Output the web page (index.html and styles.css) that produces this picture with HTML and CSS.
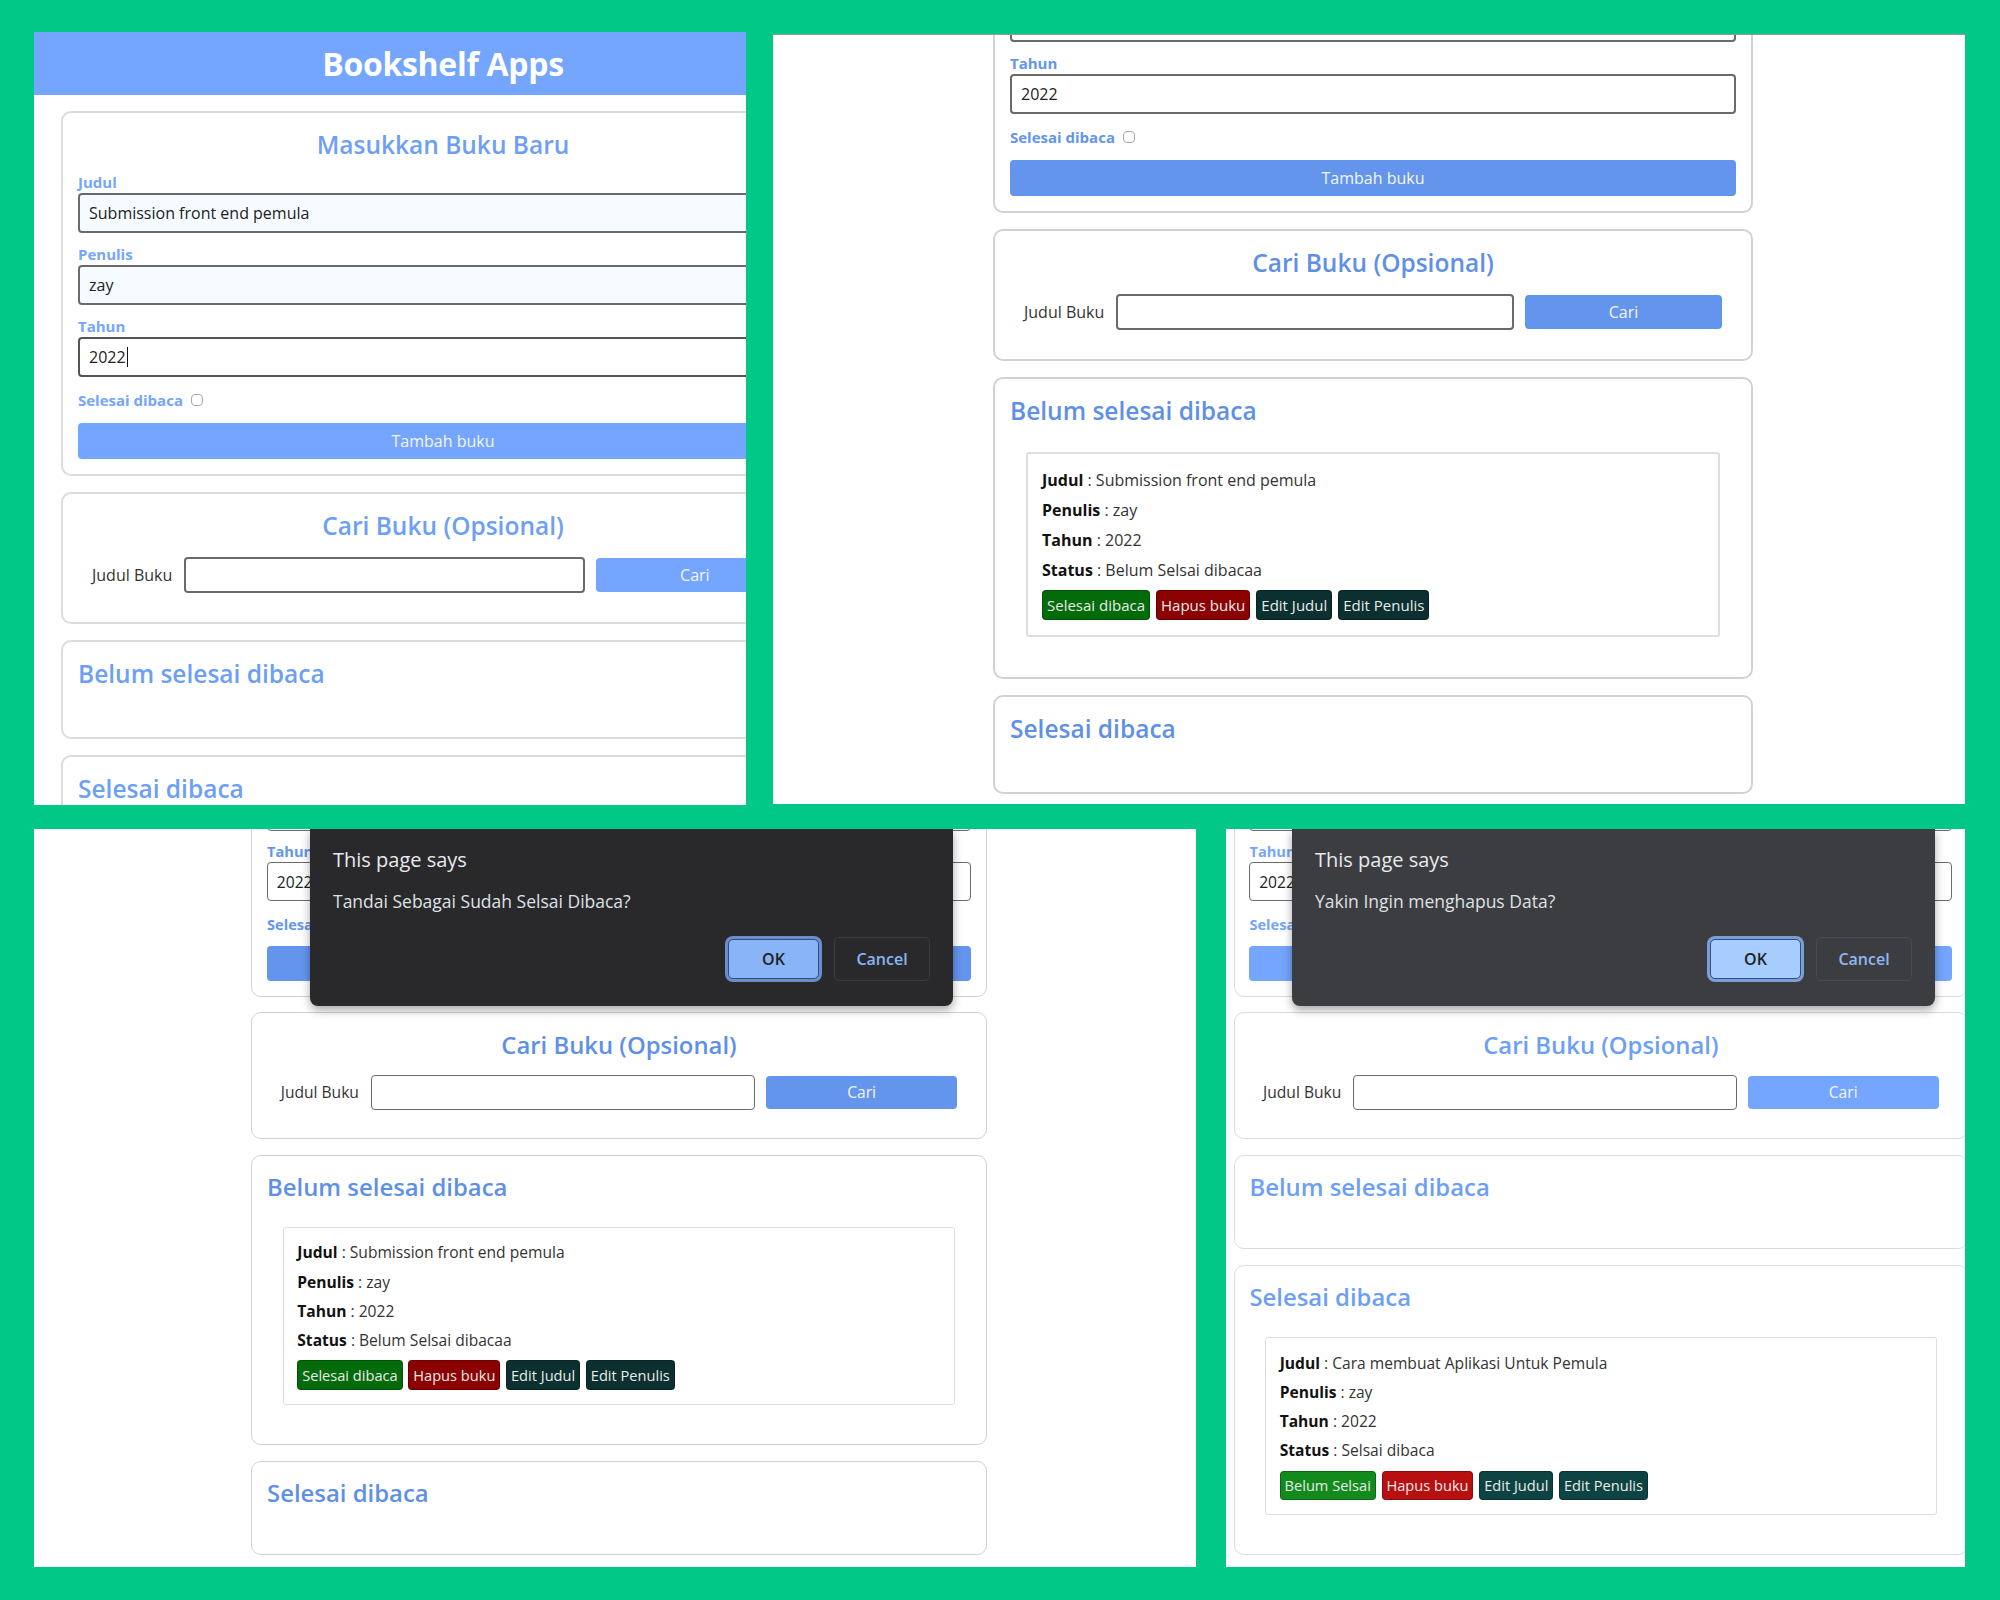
FILE: index.html
```html
<!DOCTYPE html>
<html lang="id">
<head>
<meta charset="utf-8">
<title>Bookshelf Apps</title>
<link rel="stylesheet" href="styles.css">
</head>
<body>
<div class="sheet">
  <div class="row row-top">
    <!-- Panel 1 -->
    <div class="panel panel-1">
      <div class="page p1">
        <header class="app-head"><h1>Bookshelf Apps</h1></header>
        <main class="cards">
          <section class="card form-card">
            <h2>Masukkan Buku Baru</h2>
            <div class="field"><label>Judul</label><div class="input tinted">Submission front end pemula</div></div>
            <div class="field"><label>Penulis</label><div class="input tinted">zay</div></div>
            <div class="field"><label>Tahun</label><div class="input focus">2022<span class="caret"></span></div></div>
            <div class="check-row"><span>Selesai dibaca</span><span class="box"></span></div>
            <button class="primary wide">Tambah buku</button>
          </section>
          <section class="card search-card">
            <h2>Cari Buku (Opsional)</h2>
            <div class="search-row"><label>Judul Buku</label><div class="input"></div><button class="primary">Cari</button></div>
          </section>
          <section class="card shelf"><h2 class="left">Belum selesai dibaca</h2><div class="list"></div></section>
          <section class="card shelf"><h2 class="left">Selesai dibaca</h2><div class="list"></div></section>
        </main>
      </div>
    </div>

    <!-- Panel 2 -->
    <div class="panel panel-2">
      <div class="page p2">
        <header class="app-head"><h1>Bookshelf Apps</h1></header>
        <main class="cards">
          <section class="card form-card">
            <h2>Masukkan Buku Baru</h2>
            <div class="field"><label>Judul</label><div class="input">Submission front end pemula</div></div>
            <div class="field"><label>Penulis</label><div class="input">zay</div></div>
            <div class="field"><label>Tahun</label><div class="input">2022</div></div>
            <div class="check-row"><span>Selesai dibaca</span><span class="box"></span></div>
            <button class="primary wide">Tambah buku</button>
          </section>
          <section class="card search-card">
            <h2>Cari Buku (Opsional)</h2>
            <div class="search-row"><label>Judul Buku</label><div class="input"></div><button class="primary">Cari</button></div>
          </section>
          <section class="card shelf">
            <h2 class="left">Belum selesai dibaca</h2>
            <div class="list">
              <article class="book">
                <p><b>Judul</b> : Submission front end pemula</p>
                <p><b>Penulis</b> : zay</p>
                <p><b>Tahun</b> : 2022</p>
                <p><b>Status</b> : Belum Selsai dibacaa</p>
                <div class="actions"><button class="act green">Selesai dibaca</button><button class="act red">Hapus buku</button><button class="act dark">Edit Judul</button><button class="act dark">Edit Penulis</button></div>
              </article>
            </div>
          </section>
          <section class="card shelf"><h2 class="left">Selesai dibaca</h2><div class="list"></div></section>
        </main>
      </div>
    </div>
  </div>

  <div class="row row-bottom">
    <!-- Panel 3 -->
    <div class="panel panel-3">
      <div class="page p3">
        <header class="app-head"><h1>Bookshelf Apps</h1></header>
        <main class="cards">
          <section class="card form-card">
            <h2>Masukkan Buku Baru</h2>
            <div class="field"><label>Judul</label><div class="input">Submission front end pemula</div></div>
            <div class="field"><label>Penulis</label><div class="input">zay</div></div>
            <div class="field"><label>Tahun</label><div class="input">2022</div></div>
            <div class="check-row"><span>Selesai dibaca</span><span class="box"></span></div>
            <button class="primary wide">Tambah buku</button>
          </section>
          <section class="card search-card">
            <h2>Cari Buku (Opsional)</h2>
            <div class="search-row"><label>Judul Buku</label><div class="input"></div><button class="primary">Cari</button></div>
          </section>
          <section class="card shelf">
            <h2 class="left">Belum selesai dibaca</h2>
            <div class="list">
              <article class="book">
                <p><b>Judul</b> : Submission front end pemula</p>
                <p><b>Penulis</b> : zay</p>
                <p><b>Tahun</b> : 2022</p>
                <p><b>Status</b> : Belum Selsai dibacaa</p>
                <div class="actions"><button class="act green">Selesai dibaca</button><button class="act red">Hapus buku</button><button class="act dark">Edit Judul</button><button class="act dark">Edit Penulis</button></div>
              </article>
            </div>
          </section>
          <section class="card shelf"><h2 class="left">Selesai dibaca</h2><div class="list"></div></section>
        </main>
      </div>
      <div class="dialog d3">
        <div class="d-title">This page says</div>
        <div class="d-msg">Tandai Sebagai Sudah Selsai Dibaca?</div>
        <div class="d-actions"><button class="d-ok">OK</button><button class="d-cancel">Cancel</button></div>
      </div>
    </div>

    <!-- Panel 4 -->
    <div class="panel panel-4">
      <div class="page p4">
        <header class="app-head"><h1>Bookshelf Apps</h1></header>
        <main class="cards">
          <section class="card form-card">
            <h2>Masukkan Buku Baru</h2>
            <div class="field"><label>Judul</label><div class="input">Cara membuat Aplikasi Untuk Pemula</div></div>
            <div class="field"><label>Penulis</label><div class="input">zay</div></div>
            <div class="field"><label>Tahun</label><div class="input">2022</div></div>
            <div class="check-row"><span>Selesai dibaca</span><span class="box"></span></div>
            <button class="primary wide">Tambah buku</button>
          </section>
          <section class="card search-card">
            <h2>Cari Buku (Opsional)</h2>
            <div class="search-row"><label>Judul Buku</label><div class="input"></div><button class="primary">Cari</button></div>
          </section>
          <section class="card shelf"><h2 class="left">Belum selesai dibaca</h2><div class="list"></div></section>
          <section class="card shelf">
            <h2 class="left">Selesai dibaca</h2>
            <div class="list">
              <article class="book">
                <p><b>Judul</b> : Cara membuat Aplikasi Untuk Pemula</p>
                <p><b>Penulis</b> : zay</p>
                <p><b>Tahun</b> : 2022</p>
                <p><b>Status</b> : Selsai dibaca</p>
                <div class="actions"><button class="act green">Belum Selsai</button><button class="act red">Hapus buku</button><button class="act dark">Edit Judul</button><button class="act dark">Edit Penulis</button></div>
              </article>
            </div>
          </section>
        </main>
      </div>
      <div class="dialog d4">
        <div class="d-title">This page says</div>
        <div class="d-msg">Yakin Ingin menghapus Data?</div>
        <div class="d-actions"><button class="d-ok">OK</button><button class="d-cancel">Cancel</button></div>
      </div>
    </div>
  </div>
</div>
</body>
</html>
```

FILE: styles.css
```css
* { box-sizing: border-box; }

html, body {
  margin: 0;
  padding: 0;
}

body {
  width: 2000px;
  height: 1600px;
  background: #02c887;
  font-family: "Open Sans", "Noto Sans", "Liberation Sans", sans-serif;
  overflow: hidden;
}

.sheet {
  padding: 32px 0 0 34px;
  display: flex;
  flex-direction: column;
  gap: 24px;
}

.row {
  display: flex;
  align-items: flex-start;
}

.row-top { gap: 27px; }
.row-bottom { gap: 30px; }

.panel {
  position: relative;
  background: #ffffff;
  overflow: hidden;
  flex: none;
}

.panel-1 { width: 712px; height: 773px; }
.panel-2 { width: 1192px; height: 770px; margin-top: 2px; border-top: 1px solid #9a9a9a; }
.panel-3 { width: 1162px; height: 738px; }
.panel-4 { width: 739px; height: 738px; }

/* ---------- page ---------- */
.page {
  --accent: #74a5ff;
  --title: #6d9ff6;
  color: #222;
}

.p2, .p3 {
  --accent: #6495ed;
  --title: #5f90e7;
}

.p1 { width: 818px; }
.p2 { width: 1192px; margin-top: -266px; }
.p3 { width: 1192px; zoom: 0.975; margin-top: -270px; }
.p4 { width: 800px; zoom: 0.975; margin-top: -270px; }

.app-head {
  height: 63px;
  background: #74a5ff;
  display: flex;
  align-items: center;
  justify-content: center;
}

.app-head h1 {
  margin: 0;
  color: #ffffff;
  font-size: 32px;
  font-weight: 700;
  letter-spacing: -0.3px;
}

.cards {
  display: flex;
  flex-direction: column;
  gap: 16px;
  padding-top: 16px;
  width: 760px;
}

.p1 .cards { width: 764px; margin-left: 27px; }
.p2 .cards { margin-left: 220px; }
.p3 .cards { width: 754px; margin-left: 223px; }
.p4 .cards { width: 753px; margin-left: 8px; }

.card {
  border: 2px solid #dcdcdc;
  border-radius: 10px;
  padding: 14px 15px 15px;
  background: #fff;
}

.p2 .card, .p3 .card { border-color: #d2d2d2; }

.card h2 {
  margin: 0;
  font-size: 24.5px;
  line-height: 36px;
  font-weight: 600;
  color: var(--title);
  text-align: center;
}

.card h2.left { text-align: left; }

.form-card h2 { margin-bottom: -2px; }

/* ---------- form ---------- */
.field label {
  display: block;
  margin: 13px 0 3px;
  font-size: 15px;
  line-height: 16px;
  font-weight: 700;
  color: var(--accent);
}

.input {
  height: 40px;
  border: 2px solid #6a6a6a;
  border-radius: 4px;
  background: #fff;
  padding: 0 9px;
  display: flex;
  align-items: center;
  font-size: 16px;
  color: #222;
  white-space: nowrap;
  overflow: hidden;
}

.input.tinted { background: #f6fbff; }
.input.focus { border-color: #555; }

.caret {
  display: inline-block;
  width: 1px;
  height: 20px;
  background: #111;
  margin-left: 1px;
}

.check-row {
  margin-top: 14px;
  height: 18px;
  display: flex;
  align-items: center;
  gap: 8px;
  font-size: 15px;
  font-weight: 700;
  color: var(--accent);
}

.box {
  width: 12px;
  height: 12px;
  border: 1.5px solid #a9a9a9;
  border-radius: 4px;
  background: #fff;
}

button {
  font-family: inherit;
  cursor: default;
}

.primary {
  border: none;
  border-radius: 4px;
  background: var(--accent);
  color: #f3f7ff;
  font-size: 16px;
  height: 34px;
  padding: 0;
}

.primary.wide {
  display: block;
  width: 100%;
  height: 36px;
  margin-top: 14px;
}

/* ---------- search ---------- */
.search-card { padding-bottom: 29px; }

.search-row {
  margin-top: 13px;
  display: flex;
  align-items: center;
  padding: 0 14px;
}

.search-row label {
  font-size: 16px;
  color: #333;
  margin-right: 12px;
  white-space: nowrap;
}

.search-row .input {
  flex: 2 1 0;
  min-width: 0;
  padding: 0;
  height: 36px;
}

.search-row .primary {
  flex: 1 1 0;
  min-width: 0;
  margin-left: 11px;
}

/* ---------- shelves ---------- */
.shelf { padding-bottom: 16px; }

.list {
  display: flow-root;
  min-height: 29px;
}

.book {
  margin: 23px 16px 24px;
  border: 2px solid #dedede;
  border-radius: 3px;
  padding: 16px 14px 15px;
}

.book p {
  margin: 0 0 10px;
  font-size: 16px;
  line-height: 20px;
  color: #333;
}

.book b {
  font-weight: 700;
  color: #111;
}

.actions {
  display: flex;
  gap: 6px;
}

.act {
  height: 30px;
  border: 1px solid rgba(0,0,0,0.25);
  border-radius: 4px;
  padding: 0 4px;
  font-size: 15px;
  color: #e9ece9;
}

.act.green { background: #046b0a; }
.act.red { background: #8b0000; }
.act.dark { background: #0c2f2f; }

.p4 .act.green { background: #138a1c; }
.p4 .act.red { background: #b80f10; }
.p4 .act.dark { background: #0e4343; }

/* ---------- dialog ---------- */
.dialog {
  position: absolute;
  top: 0;
  width: 643px;
  height: 177px;
  padding: 18px 23px 0;
  border-radius: 0 0 8px 8px;
  box-shadow: 0 4px 10px rgba(0,0,0,0.35);
  color: #e8eaed;
}

.d3 { left: 276px; background: #29292c; }
.d4 { left: 66px; background: #3c3d41; }

.d-title {
  font-size: 20px;
  line-height: 26px;
}

.d-msg {
  margin-top: 18px;
  font-size: 17.5px;
  line-height: 20px;
  color: #dfe1e4;
}

.d-actions {
  margin-top: 28px;
  display: flex;
  justify-content: flex-end;
  gap: 15px;
}

.d-ok {
  width: 91px;
  height: 40px;
  border: 1px solid #2f4e82;
  border-radius: 5px;
  background: #8ab4f8;
  color: #202124;
  font-size: 16px;
  font-weight: 600;
  box-shadow: 0 0 0 3px #6c8ccb;
}

.d-cancel {
  width: 96px;
  height: 44px;
  margin-top: -2px;
  border: 1px solid #3a3b3e;
  border-radius: 5px;
  background: transparent;
  color: #8ab4f8;
  font-size: 16px;
  font-weight: 600;
}

.d4 .d-ok { background: #a6cdfd; box-shadow: 0 0 0 3px #7d9dd6; }
.d4 .d-cancel { color: #90b7f2; border-color: #48494d; }
```
